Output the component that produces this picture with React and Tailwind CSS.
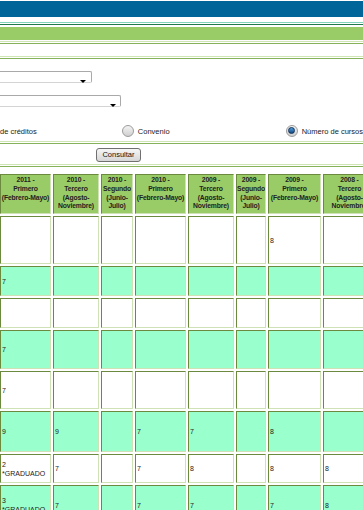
import React from 'react';

const cols = ['w-[51px]', 'w-[46px]', 'w-[32px]', 'w-[51px]', 'w-[46px]', 'w-[30px]', 'w-[53px]', 'w-[53px]'];

const headers = [
  ['2011 -', 'Primero', '(Febrero-Mayo)'],
  ['2010 -', 'Tercero', '(Agosto-', 'Noviembre)'],
  ['2010 -', 'Segundo', '(Junio-', 'Julio)'],
  ['2010 -', 'Primero', '(Febrero-Mayo)'],
  ['2009 -', 'Tercero', '(Agosto-', 'Noviembre)'],
  ['2009 -', 'Segundo', '(Junio-', 'Julio)'],
  ['2009 -', 'Primero', '(Febrero-Mayo)'],
  ['2008 -', 'Tercero', '(Agosto-', 'Noviembre)'],
];

const rows = [
  { h: 'h-[48px]', mint: false, cells: ['', '', '', '', '', '', '8', ''] },
  { h: 'h-[30px]', mint: true, cells: ['7', '', '', '', '', '', '', ''] },
  { h: 'h-[30px]', mint: false, cells: ['', '', '', '', '', '', '', ''] },
  { h: 'h-[39px]', mint: true, cells: ['7', '', '', '', '', '', '', ''] },
  { h: 'h-[38px]', mint: false, cells: ['7', '', '', '', '', '', '', ''] },
  { h: 'h-[41px]', mint: true, cells: ['9', '9', '', '7', '7', '', '8', ''] },
  { h: 'h-[29px]', mint: false, cells: [['2', '*GRADUADO'], '7', '', '7', '8', '', '8', '8'] },
  { h: 'h-[40px]', mint: true, cells: [['3', '*GRADUADO'], '7', '', '7', '7', '', '7', '8'] },
];

const cellBorder = 'border border-t-[#6b8a3e] border-l-[#6b8a3e] border-b-[#cfe2b6] border-r-[#cfe2b6]';

function Line({ light, mt }) {
  return <div className={`${mt} h-px ${light ? 'bg-[#cfe6b4]' : 'bg-[#86b25c]'}`} />;
}

function Select({ width, arrowLeft }) {
  return (
    <div className={`relative -ml-[6px] h-[12px] ${width} border border-[#a9a9a9] border-b-[#d4d4d4] rounded-r-[2px] bg-white`}>
      <span className={`absolute ${arrowLeft} top-[8px] w-0 h-0 border-l-[3px] border-r-[3px] border-t-[3px] border-l-transparent border-r-transparent border-t-black`} />
    </div>
  );
}

function Radio({ checked }) {
  return (
    <span className="inline-flex items-center justify-center w-[12px] h-[12px] rounded-full border border-[#9c9c9c] bg-gradient-to-b from-[#f4f4f4] to-[#cfcfcf]">
      {checked && (
        <span className="w-[7px] h-[7px] rounded-full border border-[#0c2f55] bg-gradient-to-b from-[#4d9de0] to-[#124b86]" />
      )}
    </span>
  );
}

export default function App() {
  return (
    <div className="w-[363px] h-[510px] overflow-hidden bg-white font-['Liberation_Sans',Arial,sans-serif] text-[#222]">
      {/* banner */}
      <div className="mt-px h-[16px] bg-[#006699]" />
      <div className="mt-[5px] h-px bg-[#80d4bc]" />
      <div className="mt-px h-px bg-[#1f7a4b]" />
      <div className="mt-[2px] h-[13px] bg-[#99cc66]" />
      <Line light mt="mt-px" />
      <Line mt="mt-px" />
      <Line light mt="mt-[12px]" />
      <Line mt="mt-px" />

      {/* filtros */}
      <div className="mt-[12px]">
        <Select width="w-[98px]" arrowLeft="left-[85px]" />
      </div>
      <div className="mt-[12px]">
        <Select width="w-[127px]" arrowLeft="left-[115px]" />
      </div>
      <div className="mt-[17px] h-[13px] flex items-center text-[7.5px] whitespace-nowrap">
        <span className="w-[122px] pt-[2px]">de créditos</span>
        <Radio />
        <span className="ml-[4px] w-[148px] pt-[2px]">Convenio</span>
        <Radio checked />
        <span className="ml-[4px] pt-[2px]">Número de cursos</span>
      </div>
      <Line light mt="mt-[4px]" />
      <Line mt="mt-px" />
      <div className="mt-[4px] h-[14px] pl-[96px]">
        <button className="w-[45px] h-[14px] flex items-center justify-center rounded-[3px] border border-[#707070] bg-gradient-to-b from-[#f6f6f6] to-[#d6d6d6] text-[7.5px] text-[#111]">
          Consultar
        </button>
      </div>
      <Line light mt="mt-[2px]" />
      <Line mt="mt-px" />

      {/* tabla */}
      <div className="mt-[7px] flex flex-col gap-[2px]">
        <div className="flex gap-[2px] h-[40px]">
          {headers.map((lines, i) => (
            <div key={i} className={`${cols[i]} shrink-0 ${cellBorder} bg-[#99cc66] pt-[1px] text-center text-[6.8px] leading-[8.8px] tracking-[-0.15px] font-bold text-[#222] whitespace-nowrap overflow-hidden`}>
              {lines.map((l, j) => (
                <div key={j}>{l}</div>
              ))}
            </div>
          ))}
        </div>
        {rows.map((row, r) => (
          <div key={r} className={`flex gap-[2px] ${row.h}`}>
            {row.cells.map((c, i) => (
              <div
                key={i}
                className={`${cols[i]} shrink-0 ${cellBorder} ${row.mint ? 'bg-[#99ffcc]' : 'bg-white'} flex flex-col justify-center pl-[1px] text-[7px] leading-[9px] whitespace-nowrap overflow-hidden`}
              >
                {Array.isArray(c) ? c.map((t, j) => <div key={j}>{t}</div>) : c}
              </div>
            ))}
          </div>
        ))}
      </div>
    </div>
  );
}
